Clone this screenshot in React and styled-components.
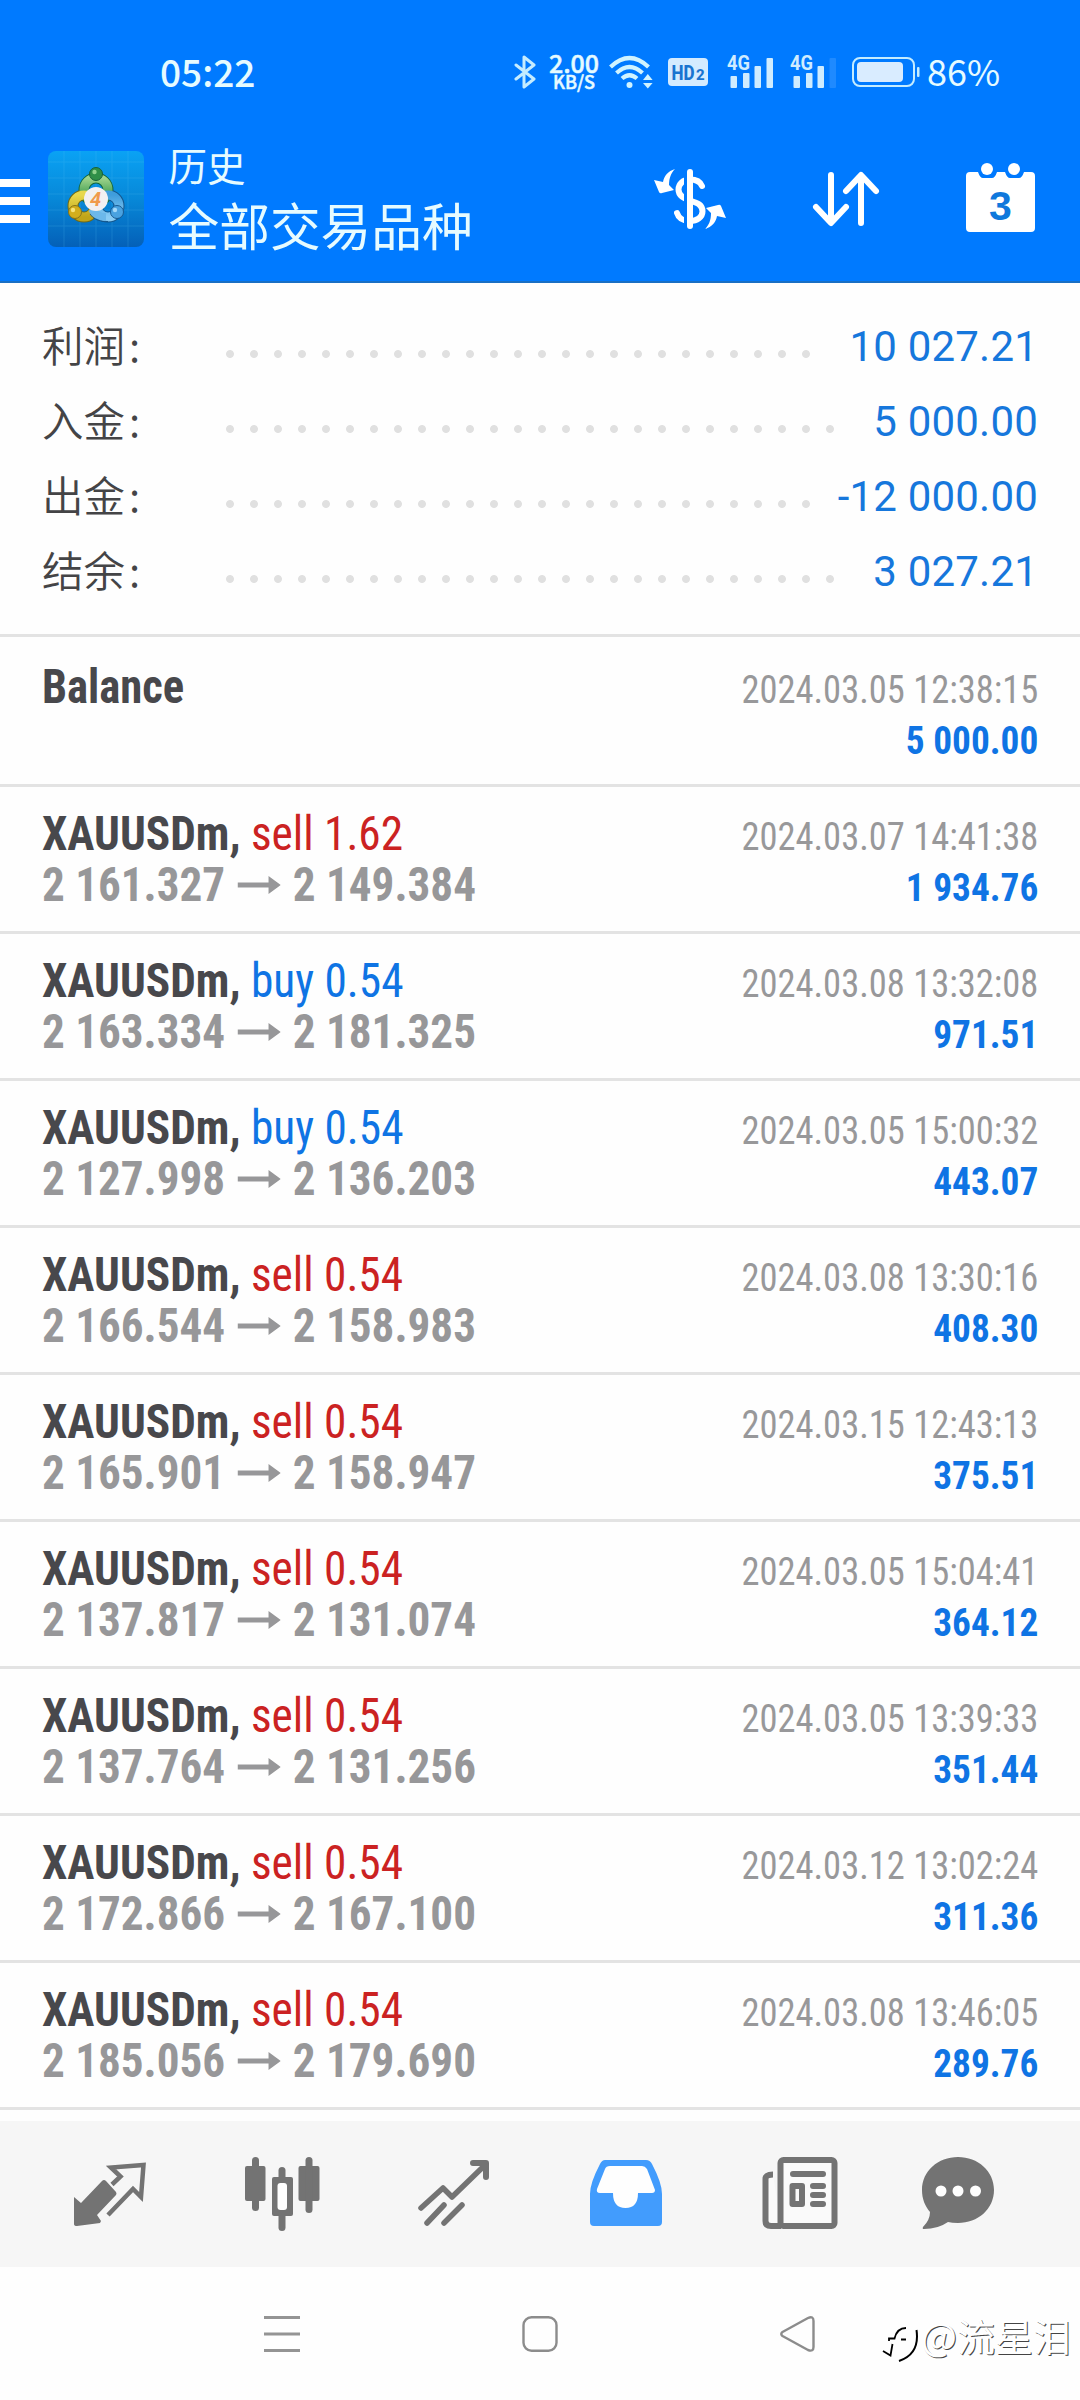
import React from 'react'
import styled, { createGlobalStyle } from 'styled-components'

const GlobalStyle = createGlobalStyle`
* { box-sizing: border-box; }
body { margin: 0; background: #fefefe; }
`

const Screen = styled.div`
width: 1080px;
height: 2400px;
display: flex;
flex-direction: column;
background: #fefefe;
overflow: hidden;
font-family: "Roboto", "Noto Sans CJK SC", sans-serif;
`

/* ---- header ---- */
const Header = styled.header`
height: 283px;
background: #007aff;
border-bottom: 2px solid #1a6fc4;
color: #e6fbff;
font-family: "Noto Sans CJK SC", sans-serif;
`
const StatusBar = styled.div`
height: 143px;
padding: 0 81px 0 160px;
display: flex;
align-items: center;
justify-content: space-between;
`
const Clock = styled.div`
font-size: 37px;
font-weight: 500;
line-height: 40px;
margin-bottom: 1px;
`
const StatusIcons = styled.div`
display: flex;
align-items: center;
`
const Speed = styled.div`
width: 54px;
margin: 0 8px 2px 11px;
text-align: center;
font-weight: 500;
font-size: 25px;
line-height: 20px;
-webkit-text-stroke: 0.500px #e6fbff;
`
const SpeedUnit = styled.div`
font-size: 18px;
line-height: 18px;
`
const Percent = styled.div`
margin: 0 0 4px 7px;
width: 72px;
font-size: 36px;
line-height: 40px;
`
const TitleBar = styled.div`
height: 138px;
display: flex;
align-items: flex-start;
`
const Burger = styled.div`
width: 30px;
margin-top: 36px;
display: grid;
gap: 10px;
`
const BurgerLine = styled.span`
height: 8px;
background: white;
`
const Logo = styled.svg`
margin: 8px 24.500px 0 18px;
`
const Titles = styled.div`
flex: 1;
white-space: nowrap;
`
const Section = styled.div`
font-size: 38.500px;
line-height: 42px;
`
const Title = styled.div`
font-size: 50.700px;
line-height: 78px;
`
const Actions = styled.div`
display: flex;
gap: 82px;
padding: 20px 43.500px 0 0;
`

/* ---- summary ---- */
const Summary = styled.section`
height: 354px;
padding: 26px 42px 0;
border-bottom: 3px solid #e3e3e3;
`
const SummaryRow = styled.div`
height: 75px;
display: flex;
align-items: center;
`
const Label = styled.div`
width: 176px;
margin-bottom: 5px;
font-family: "Noto Sans CJK SC", sans-serif;
font-size: 41.500px;
font-weight: 350;
color: #444446;
`
const Colon = styled.span`
margin-left: 4px;
`
const Dots = styled.div`
flex: 1;
height: 24px;
margin: 14px 26px 0 0;
background: radial-gradient(circle, #e0e0e0 3.500px, transparent 4.400px) 0 0 / 24px 24px;
`
const Amount = styled.div`
font-size: 42px;
letter-spacing: 0.200px;
color: #1677dc;
`

/* ---- deals ---- */
const Deal = styled.div`
height: ${props => props.$tall ? 150 : 147}px;
padding: ${props => props.$tall ? 33 : 30}px 42px 0;
border-bottom: 3px solid #e3e3e3;
display: flex;
justify-content: space-between;
font-stretch: 75%;
white-space: nowrap;
`
const Side = styled.div`
text-align: ${props => props.$right ? "right" : "left"};
`
const Symbol = styled.div`
font-size: 48px;
font-weight: 700;
line-height: 51px;
height: 51px;
margin-top: -9px;
color: #48484c;
transform: scaleX(${props => props.$narrow ? 0.93 : 0.944});
transform-origin: left;
`
const Kind = styled.span`
font-weight: 400;
color: ${props => props.$buy ? "#0f74e4" : "#cb2222"};
`
const Prices = styled.div`
display: flex;
align-items: center;
font-size: 48px;
font-weight: 700;
line-height: 51px;
color: #979799;
transform: scaleX(0.94);
transform-origin: left;
`
const Arrow = styled.svg`
margin: 0 13px 0 13px;
`
const Time = styled.div`
font-size: 39.500px;
line-height: 51px;
margin-top: -6px;
color: #98989a;
transform: scaleX(0.924);
transform-origin: right;
`
const Profit = styled.div`
font-size: 39.500px;
font-weight: 700;
line-height: 51px;
color: #0f74e4;
transform: scaleX(0.945);
transform-origin: right;
`

/* ---- bottom ---- */
const TabBar = styled.nav`
height: 146px;
margin-top: 11px;
padding: 0 24px;
background: #f6f6f6;
display: grid;
grid-template-columns: repeat(6, 172px);
align-items: center;
justify-items: center;
color: #737373;
`
const NavBar = styled.div`
flex: 1;
position: relative;
display: grid;
grid-template-columns: repeat(3, 258px);
justify-content: center;
justify-items: center;
padding-top: 47px;
`
const Watermark = styled.div`
position: absolute;
right: 9px;
top: 38px;
display: flex;
align-items: center;
font-family: "Noto Sans CJK SC", sans-serif;
font-size: 38px;
font-weight: 400;
line-height: 56px;
color: white;
text-shadow: 1px 1px 0 #444;
`

const totals = [
    { label: "利润", amount: "10 027.21" },
    { label: "入金", amount: "5 000.00" },
    { label: "出金", amount: "-12 000.00" },
    { label: "结余", amount: "3 027.21" },
]

const deals = [
    { kind: "sell", lot: "1.62", open: "2 161.327", close: "2 149.384", time: "2024.03.07 14:41:38", profit: "1 934.76" },
    { kind: "buy", lot: "0.54", open: "2 163.334", close: "2 181.325", time: "2024.03.08 13:32:08", profit: "971.51" },
    { kind: "buy", lot: "0.54", open: "2 127.998", close: "2 136.203", time: "2024.03.05 15:00:32", profit: "443.07" },
    { kind: "sell", lot: "0.54", open: "2 166.544", close: "2 158.983", time: "2024.03.08 13:30:16", profit: "408.30" },
    { kind: "sell", lot: "0.54", open: "2 165.901", close: "2 158.947", time: "2024.03.15 12:43:13", profit: "375.51" },
    { kind: "sell", lot: "0.54", open: "2 137.817", close: "2 131.074", time: "2024.03.05 15:04:41", profit: "364.12" },
    { kind: "sell", lot: "0.54", open: "2 137.764", close: "2 131.256", time: "2024.03.05 13:39:33", profit: "351.44" },
    { kind: "sell", lot: "0.54", open: "2 172.866", close: "2 167.100", time: "2024.03.12 13:02:24", profit: "311.36" },
    { kind: "sell", lot: "0.54", open: "2 185.056", close: "2 179.690", time: "2024.03.08 13:46:05", profit: "289.76" },
]

const Bluetooth = () => (
    <svg width="22" height="34" viewBox="0 0 22 34" fill="none" stroke="#c4ecff" strokeWidth="3" strokeLinejoin="round" strokeLinecap="round">
        <path d="M2 10 L20 24 L10 32 V2 L20 10 L2 24" />
    </svg>
)

const Wifi = () => (
    <svg width="46" height="34" viewBox="0 0 46 34" fill="none" stroke="#d0f3ff" strokeWidth="4.200">
        <path d="M1.500 12 Q20.500 -6 39.500 12" />
        <path d="M7.500 18 Q20.500 6 33.500 18" />
        <path d="M13 23.500 Q20.500 17 28 23.500" />
        <circle cx="20.500" cy="30" r="3" fill="#d0f3ff" stroke="none" />
        <path d="M34 25 L38.800 19 L43.600 25 Z M34 28 H43.600 L38.800 33.500 Z" fill="#d0f3ff" stroke="none" />
    </svg>
)

const Hd = () => (
    <svg width="40" height="28" viewBox="0 0 40 28" style={{ marginLeft: 13 }}>
        <rect width="40" height="28" rx="4" fill="#d4ebff" />
        <text x="3.500" y="21.500" fontFamily="Roboto" fontWeight="800" fontSize="21" textLength="23" lengthAdjust="spacingAndGlyphs" fill="#1a74d0">HD</text>
        <text x="28" y="22" fontFamily="Roboto" fontWeight="800" fontSize="15" fill="#1a74d0">2</text>
    </svg>
)

const Signal = ({ weak, gap }) => (
    <svg width="47" height="44" viewBox="0 -6 47 44" style={{ marginLeft: gap }} fill="#cfecff">
        <text x="0" y="14" fontFamily="Roboto" fontWeight="700" fontSize="21" textLength="23" lengthAdjust="spacingAndGlyphs">4G</text>
        <rect x="3.500" y="20" width="6.500" height="12" rx="1" />
        <rect x="16" y="17" width="6.500" height="15" rx="1" />
        <rect x="27.500" y="10" width="6.500" height="22" rx="1" />
        <rect x="39.500" y="2" width="6.500" height="30" rx="1" opacity={weak ? 0.15 : 1} />
    </svg>
)

const Battery = () => (
    <svg width="68" height="30" viewBox="0 0 68 30" style={{ marginLeft: 15 }}>
        <rect x="1" y="1" width="61" height="28" rx="7" fill="none" stroke="#c4ecff" strokeWidth="2" />
        <rect x="5" y="5" width="46" height="20" rx="4" fill="#d9ecff" />
        <rect x="65" y="10" width="2.500" height="10" rx="1" fill="#c4ecff" />
    </svg>
)

const AppLogo = () => (
    <Logo width="96" height="96" viewBox="0 0 96 96">
        <defs>
            <linearGradient id="sky" x1="0" y1="0" x2="0" y2="1">
                <stop offset="0" stopColor="#0aa2f4" />
                <stop offset="0.5" stopColor="#0788d8" />
                <stop offset="1" stopColor="#0460b8" />
            </linearGradient>
            <linearGradient id="green" x1="0" y1="0" x2="0" y2="1">
                <stop offset="0" stopColor="#9fd48c" />
                <stop offset="1" stopColor="#1f8a3c" />
            </linearGradient>
            <linearGradient id="gold" x1="0" y1="0" x2="0" y2="1">
                <stop offset="0" stopColor="#e8d84c" />
                <stop offset="1" stopColor="#c0a418" />
            </linearGradient>
            <linearGradient id="blue" x1="0" y1="0" x2="0" y2="1">
                <stop offset="0" stopColor="#3f9ddc" />
                <stop offset="1" stopColor="#8accf4" />
            </linearGradient>
        </defs>
        <rect width="96" height="96" rx="8" fill="url(#sky)" />
        <path d="M16 0V96M32 0V96M48 0V96M64 0V96M80 0V96M0 11H96M0 27H96M0 43H96M0 59H96M0 75H96" stroke="#5cc4f4" strokeWidth="1" opacity="0.2" />
        <g strokeWidth="9" fill="none">
            <circle cx="48" cy="39" r="12" stroke="#14663a" strokeWidth="11" />
            <circle cx="36" cy="55" r="11" stroke="#6e6a18" strokeWidth="11" />
            <circle cx="60" cy="55" r="11" stroke="#14568c" strokeWidth="11" />
            <circle cx="48" cy="39" r="12" stroke="url(#green)" />
            <circle cx="60" cy="55" r="11" stroke="url(#blue)" />
            <circle cx="36" cy="55" r="11" stroke="url(#gold)" />
            <path d="M42 63 Q47 71 60 70.500" stroke="#14568c" strokeWidth="1" />
            <path d="M44 58 Q48 66 58 66" stroke="#6cb8ea" strokeWidth="8" />
        </g>
        <circle cx="48" cy="23" r="6.500" fill="#2f8f48" stroke="#17603a" />
        <circle cx="27" cy="61" r="6.500" fill="#d2ae1c" stroke="#85731a" />
        <circle cx="69" cy="61" r="6.500" fill="#4aa2e0" stroke="#175a92" />
        <circle cx="46.500" cy="21" r="2.200" fill="#8fd08c" />
        <circle cx="25" cy="59" r="2.200" fill="#f6e27a" />
        <circle cx="67" cy="59" r="2.200" fill="#a4d8f8" />
        <circle cx="48" cy="48" r="12" fill="#f2f0f2" />
        <text x="47.500" y="55" textAnchor="middle" fontFamily="Roboto" fontStyle="italic" fontWeight="700" fontSize="20" fill="#f09a4c">4</text>
    </Logo>
)

const Dollar = () => (
    <svg width="72" height="72" viewBox="0 0 72 72" fill="none" stroke="white" strokeWidth="6" strokeLinecap="round" style={{ marginRight: 2.5 }}>
        <path d="M48 23 C46 18 41 16.500 36 16.500 C29 16.500 24.500 21 24.500 26.500 C24.500 33 30 35.500 36 37.500 C44 40 48.500 42 48.500 48.500 C48.500 54 43 58 36 58 C29 58 24.500 55 23 50" />
        <path d="M31.500 10 V64" stroke="#007aff" strokeWidth="3" strokeLinecap="butt" />
        <path d="M36 9 V63" />
        <path d="M21 6 C14 8 10 13 9 19 L0 17 L5 29 Q6 31 8 30 L20 27 L15 22 C15 15 17 10 21 6 Z" fill="white" stroke="none" />
        <path d="M51 66 C58 64 62 59 63 53 L72 55 L67 43 Q66 41 64 42 L52 45 L57 50 C57 57 55 62 51 66 Z" fill="white" stroke="none" />
    </svg>
)

const Sort = () => (
    <svg width="72" height="72" viewBox="0 0 72 72" fill="none" stroke="white" strokeWidth="6" strokeLinecap="round" strokeLinejoin="round">
        <path d="M20 12 V59 M5 44 L20 60 L35 44" />
        <path d="M50 60 V13 M35 28 L50 12 L65 28" />
    </svg>
)

const Calendar = () => (
    <svg width="72" height="72" viewBox="0 0 72 72">
        <path d="M5 9 H13 Q15 15 18 15 H27 Q30 15 32 9 H40 Q42 15 45 15 H54 Q57 15 59 9 H66 Q70 9 70 13 V65 Q70 69 66 69 H5 Q1 69 1 65 V13 Q1 9 5 9 Z" fill="white" />
        <circle cx="22" cy="6" r="8" fill="#007aff" />
        <circle cx="49" cy="6" r="8" fill="#007aff" />
        <circle cx="22" cy="6" r="6" fill="white" />
        <circle cx="49" cy="6" r="6" fill="white" />
        <text x="35.500" y="57" textAnchor="middle" fontFamily="Liberation Sans" fontWeight="700" fontSize="41" fill="#0f78dc">3</text>
    </svg>
)

const Quotes = () => (
    <svg width="74" height="76" viewBox="0 0 74 76">
        <path d="M1 41 L8 47 L29 25 Q31 23 33 25 L43 36 Q44 38 43 39 L24 59 L28 65 L27 67 L4 70 Q1 70 1 68 Z" fill="currentColor" />
        <path d="M39 28.500 L47.500 20.500 L38 11.500 L70.500 9 L68 41 L60 33 L35 59" fill="none" stroke="currentColor" strokeWidth="4.500" />
    </svg>
)

const Candles = () => (
    <svg width="76" height="76" viewBox="0 0 76 76">
        <g fill="currentColor">
            <rect x="1" y="10" width="20.500" height="35" rx="2" />
            <rect x="8" y="1" width="7" height="54" rx="3.500" />
            <rect x="54.500" y="10" width="21" height="35" rx="2" />
            <rect x="61.500" y="1" width="7" height="56" rx="3.500" />
            <rect x="34.500" y="11" width="7" height="64" rx="3.500" />
            <rect x="28" y="21" width="21" height="39" rx="2" />
        </g>
        <rect x="33.500" y="27" width="9.500" height="27" rx="3" fill="#fefefe" />
    </svg>
)

const Chart = () => (
    <svg width="72" height="76" viewBox="0 0 72 76" fill="none" stroke="currentColor" strokeWidth="5.500" strokeLinecap="round" strokeLinejoin="round">
        <path d="M3 52 L25 32 L34 41 L66 10" />
        <path d="M55 7 H68 V21" strokeWidth="6" />
        <path d="M9 67 L26 49 M26 67 L44 49" />
    </svg>
)

const Inbox = () => (
    <svg width="74" height="76" viewBox="0 0 74 76">
        <path d="M16 4 H57 Q61 4 63 8 Q73 27 73 38 V66 Q73 70 69 70 H5 Q1 70 1 66 V38 Q1 27 11 8 Q13 4 16 4 Z" fill="#429cfd" />
        <path d="M21 10 H53 Q56 10 58 13 L66 34 Q66 37 63 37 H49 Q49 52 36.500 52 Q24 52 24 37 H11 Q7 37 8 33 L16 13 Q17 10 21 10 Z" fill="#fefefe" />
    </svg>
)

const News = () => (
    <svg width="76" height="76" viewBox="0 0 76 76" fill="none" stroke="currentColor" strokeWidth="6" style={{ marginLeft: 4 }}>
        <path d="M19 70 H9 Q3.500 70 3.500 65 V23 Q3.500 18.500 11 18.500" fill="#fafafa" />
        <rect x="18.500" y="4" width="54" height="66" rx="3" fill="#fafafa" />
        <path d="M31 18 H61 M51 30 H61 M51 39 H61 M51 48 H61" strokeLinecap="round" />
        <rect x="30.500" y="30" width="9.500" height="18" strokeLinejoin="round" />
    </svg>
)

const Chat = () => (
    <svg width="74" height="76" viewBox="0 0 74 76" style={{ marginRight: 24 }}>
        <path d="M37 1 C57 1 73 15 73 34 C73 53 57 67 37 67 Q31 67 27 66 Q17 73 3 73 Q1 73 2 71 Q9 64 9 56 C4 50 1 43 1 34 C1 15 17 1 37 1 Z" fill="currentColor" />
        <circle cx="20" cy="35" r="5.500" fill="#fefefe" />
        <circle cx="37" cy="35" r="5.500" fill="#fefefe" />
        <circle cx="54.500" cy="35" r="5.500" fill="#fefefe" />
    </svg>
)

const App = () => {
    return (
        <Screen>
            <GlobalStyle />
            <Header>
                <StatusBar>
                    <Clock>05:22</Clock>
                    <StatusIcons>
                        <Bluetooth />
                        <Speed>
                            2.00
                            <SpeedUnit>KB/S</SpeedUnit>
                        </Speed>
                        <Wifi />
                        <Hd />
                        <Signal gap={19} />
                        <Signal gap={16} weak />
                        <Battery />
                        <Percent>86%</Percent>
                    </StatusIcons>
                </StatusBar>
                <TitleBar>
                    <Burger><BurgerLine /><BurgerLine /><BurgerLine /></Burger>
                    <AppLogo />
                    <Titles>
                        <Section>历史</Section>
                        <Title>全部交易品种</Title>
                    </Titles>
                    <Actions>
                        <Dollar />
                        <Sort />
                        <Calendar />
                    </Actions>
                </TitleBar>
            </Header>
            <Summary>
                {totals.map(item => (
                    <SummaryRow key={item.label}>
                        <Label>{item.label}<Colon>:</Colon></Label>
                        <Dots />
                        <Amount>{item.amount}</Amount>
                    </SummaryRow>
                ))}
            </Summary>
            <Deal $tall>
                <Side><Symbol $narrow>Balance</Symbol></Side>
                <Side $right>
                    <Time>2024.03.05 12:38:15</Time>
                    <Profit>5 000.00</Profit>
                </Side>
            </Deal>
            {deals.map(deal => (
                <Deal key={deal.open}>
                    <Side>
                        <Symbol>XAUUSDm, <Kind $buy={deal.kind === "buy"}>{deal.kind} {deal.lot}</Kind></Symbol>
                        <Prices>
                            {deal.open}
                            <Arrow width="46" height="18" viewBox="0 0 46 18" fill="#979799">
                                <path d="M0 6.500 H33 V0 L46 9 L33 18 V11.500 H0 Z" />
                            </Arrow>
                            {deal.close}
                        </Prices>
                    </Side>
                    <Side $right>
                        <Time>{deal.time}</Time>
                        <Profit>{deal.profit}</Profit>
                    </Side>
                </Deal>
            ))}
            <TabBar>
                <Quotes />
                <Candles />
                <Chart />
                <Inbox />
                <News />
                <Chat />
            </TabBar>
            <NavBar>
                <svg width="38" height="40" viewBox="0 0 38 40" stroke="#949494" strokeWidth="3">
                    <path d="M1 3.500 H37 M1 20 H37 M1 36.500 H37" />
                </svg>
                <svg width="38" height="40" viewBox="0 0 38 40" fill="none" stroke="#8c8c8c" strokeWidth="2.400">
                    <rect x="2.500" y="3.200" width="33" height="33.500" rx="8" />
                </svg>
                <svg width="38" height="40" viewBox="0 0 38 40" fill="none" stroke="#8c8c8c" strokeWidth="2.400" strokeLinejoin="round">
                    <path d="M3.500 18 L29 4 Q34.500 1.500 34.500 7 V33 Q34.500 38 29 36 L3.500 22 Q1 20 3.500 18 Z" />
                </svg>
                <Watermark>
                    <svg width="44" height="60" viewBox="-4 -19 44 60" fill="none" stroke="black" strokeWidth="1.800">
                        <path d="M2 27 L9.500 31.500 L11.500 20 M8 17 V14.500 H13.500 Q16 4 25 4 M20 15.500 H25" />
                        <path d="M35.500 6 Q39 30 18 37" strokeWidth="2" />
                    </svg>
                    @流星泪
                </Watermark>
            </NavBar>
        </Screen>
    )
}

export default App
